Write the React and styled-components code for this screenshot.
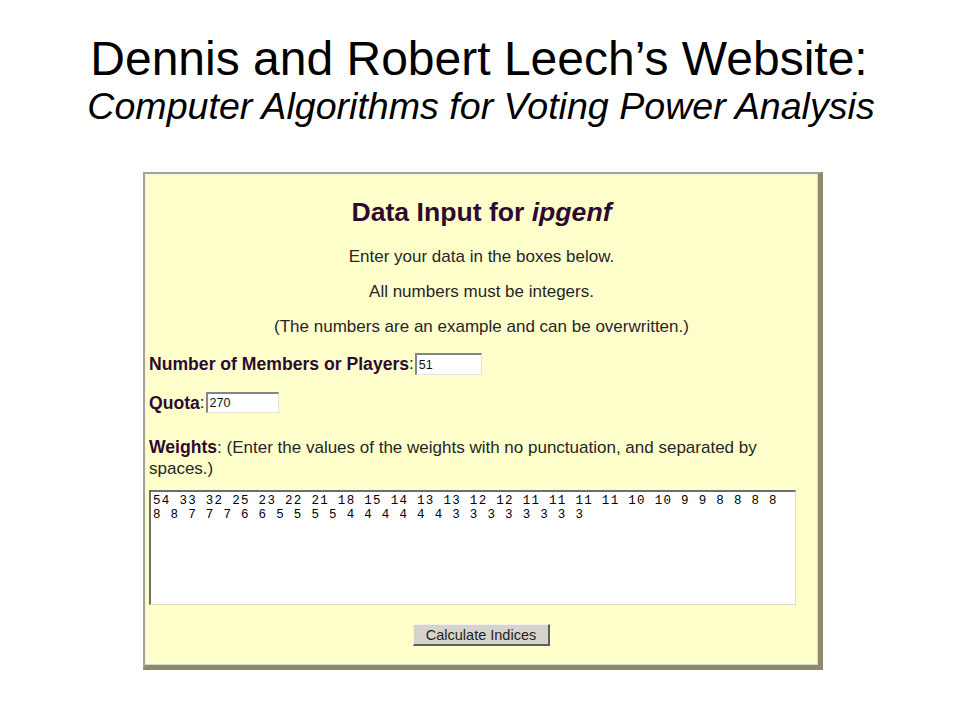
import React from "react";
import styled, { createGlobalStyle } from "styled-components";

const Global = createGlobalStyle`
  html, body { margin: 0; padding: 0; background: #ffffff; }
  body { font-family: "Liberation Sans", Arial, sans-serif; color: #000; }
`;

const Page = styled.div`
  width: 960px;
  height: 720px;
  display: flex;
  flex-direction: column;
  box-sizing: border-box;
  padding-top: 33px;
`;

const TitleBlock = styled.header`
  display: flex;
  flex-direction: column;
  align-items: center;
  padding-left: 2px;
`;

const Title = styled.h1`
  margin: 0;
  font-weight: normal;
  font-size: 48px;
  line-height: 52px;
  color: #000;
  white-space: nowrap;
  padding-right: 4px;
`;

const Subtitle = styled.h2`
  margin: 0;
  font-weight: normal;
  font-style: italic;
  font-size: 37.6px;
  line-height: 42px;
  color: #000;
  white-space: nowrap;
`;

const Stage = styled.div`
  display: flex;
  padding-left: 143px;
  margin-top: 45px;
`;

const Panel = styled.section`
  width: 680px;
  height: 498px;
  box-sizing: border-box;
  background: #ffffcc;
  border-style: solid;
  border-width: 2px 5px 5px 2px;
  border-color: #a4a396 #8b8b6c #8b8b6c #a4a396;
  box-shadow: inset -1px -1px 0 #d8d8cc, inset 1px 1px 0 #f4f4e4;
  padding: 0 4px;
  display: flex;
  flex-direction: column;
`;

const Heading = styled.h3`
  margin: 23px 0 0;
  text-align: center;
  font-size: 26.6px;
  line-height: 30px;
  font-weight: bold;
  color: #2e0b2e;
  em { font-style: italic; }
`;

const Note = styled.p`
  margin: ${(p) => p.$gap}px 0 0;
  text-align: center;
  font-size: 17px;
  line-height: 20px;
  color: #262626;
`;

const FieldRow = styled.div`
  margin-top: ${(p) => p.$gap}px;
  display: flex;
  align-items: center;
  font-size: 17px;
  line-height: 20px;
  color: #262626;
`;

const Label = styled.span`
  font-weight: bold;
  font-size: 17.6px;
  color: #2e0b2e;
`;

const TextInput = styled.input`
  width: ${(p) => p.$w}px;
  height: ${(p) => p.$h}px;
  box-sizing: border-box;
  margin-left: 1px;
  padding: 0 2px;
  border-style: solid;
  border-width: 2px 1px 1px 2px;
  border-color: #858585 #e4e2da #e4e2da #858585;
  background: #ffffff;
  font-family: "Liberation Sans", Arial, sans-serif;
  font-size: 12.5px;
  color: #111;
  outline: none;
`;

const WeightsNote = styled.p`
  margin: 24px 0 0;
  font-size: 17px;
  line-height: 21px;
  color: #262626;
  padding-right: 40px;
`;

const WeightsArea = styled.textarea`
  margin-top: 11px;
  width: 647px;
  height: 115px;
  box-sizing: border-box;
  resize: none;
  overflow: hidden;
  padding: 2px 2px;
  border-style: solid;
  border-width: 2px 1px 1px 2px;
  border-color: #6e6e6e #dcdad2 #dcdad2 #6e6e6e;
  background: #ffffff;
  font-family: "Liberation Mono", "Courier New", monospace;
  font-size: 12.5px;
  line-height: 14px;
  letter-spacing: 1.3px;
  color: #000;
  white-space: pre;
  outline: none;
`;

const ButtonRow = styled.div`
  margin-top: 19px;
  display: flex;
  justify-content: center;
`;

const Button = styled.button`
  width: 137px;
  height: 22px;
  box-sizing: border-box;
  padding: 0;
  background: #d6d3cb;
  border-style: solid;
  border-width: 1px 2px 2px 1px;
  border-color: #f2f1ec #5e5e58 #5e5e58 #f2f1ec;
  font-family: "Liberation Sans", Arial, sans-serif;
  font-size: 14.5px;
  line-height: 18px;
  color: #1e1e1e;
`;

const weights =
  "54 33 32 25 23 22 21 18 15 14 13 13 12 12 11 11 11 11 10 10 9 9 8 8 8 8\n8 8 7 7 7 6 6 5 5 5 5 4 4 4 4 4 4 3 3 3 3 3 3 3 3";

export default function App() {
  return (
    <Page>
      <Global />
      <TitleBlock>
        <Title>Dennis and Robert Leech’s Website:</Title>
        <Subtitle>Computer Algorithms for Voting Power Analysis</Subtitle>
      </TitleBlock>
      <Stage>
        <Panel>
          <Heading>
            Data Input for <em>ipgenf</em>
          </Heading>
          <Note $gap={20}>Enter your data in the boxes below.</Note>
          <Note $gap={15}>All numbers must be integers.</Note>
          <Note $gap={15}>(The numbers are an example and can be overwritten.)</Note>
          <FieldRow $gap={16}>
            <Label>Number of Members or Players</Label>:
            <TextInput $w={67} $h={22} defaultValue="51" readOnly />
          </FieldRow>
          <FieldRow $gap={17}>
            <Label>Quota</Label>:
            <TextInput $w={73} $h={21} defaultValue="270" readOnly />
          </FieldRow>
          <WeightsNote>
            <Label>Weights</Label>: (Enter the values of the weights with no
            punctuation, and separated by spaces.)
          </WeightsNote>
          <WeightsArea defaultValue={weights} readOnly spellCheck={false} />
          <ButtonRow>
            <Button type="button">Calculate Indices</Button>
          </ButtonRow>
        </Panel>
      </Stage>
    </Page>
  );
}
